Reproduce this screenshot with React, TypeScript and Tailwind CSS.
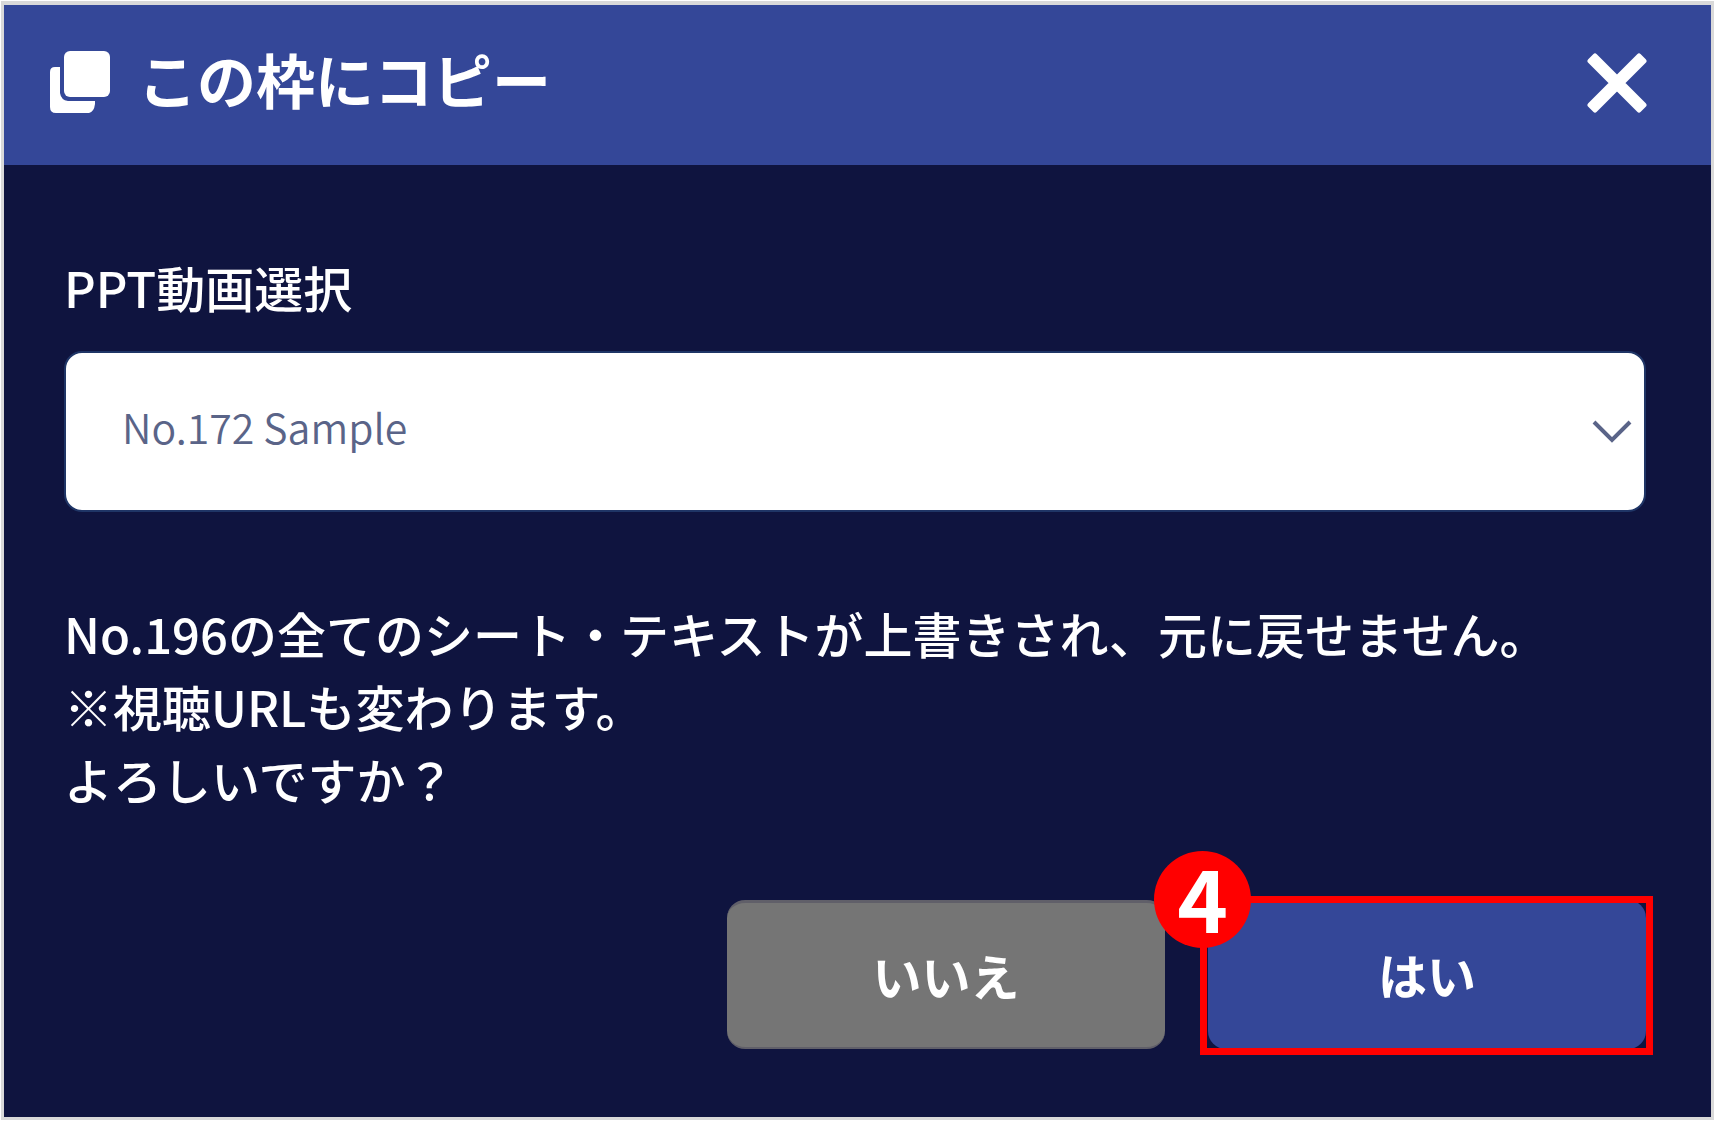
import { useState } from "react";

const videos = ["No.172 Sample"];

function CopyIcon() {
  return (
    <svg viewBox="0 0 60 62" className="h-[62px] w-[60px]" fill="currentColor" aria-hidden="true">
      <rect x="14" y="0" width="46" height="46" rx="6" />
      <path d="M10 16v26q1 7 8 8h27v3q-1 8-6 9H6q-6 0-6-6V21q0-5 5-5z" />
    </svg>
  );
}

function CloseIcon() {
  return (
    <svg viewBox="0 0 60 60" className="size-[60px]" aria-hidden="true">
      <path
        d="M8 3l22 22L52 3l5 5-22 22 22 22-5 5-22-22L8 57l-5-5 22-22L3 8z"
        fill="currentColor"
        stroke="currentColor"
        strokeWidth="5"
        strokeLinejoin="round"
      />
    </svg>
  );
}

function ChevronIcon() {
  return (
    <svg viewBox="0 0 40 24" className="h-6 w-10" aria-hidden="true">
      <path d="M2 2l18 18L38 2" fill="none" stroke="currentColor" strokeWidth="4" />
    </svg>
  );
}

export default function App() {
  const [video, setVideo] = useState(videos[0]);

  const button =
    "h-[149px] w-[438px] rounded-[18px] pb-0.5 text-[49px] leading-[73px] font-bold text-white";

  return (
    <div className="flex min-h-screen flex-col bg-white p-px font-['Noto_Sans_CJK_JP',sans-serif]">
      <div
        role="dialog"
        aria-labelledby="dialog-title"
        className="flex flex-1 flex-col border-x-[3px] border-t-4 border-b-[3px] border-[#d9d9d9] bg-[#0f143f] text-white"
      >
        <header className="flex h-40 items-start justify-between bg-[#344798] pt-[46px] pr-[64px] pl-[46px]">
          <div className="flex items-start gap-7">
            <CopyIcon />
            <h1 id="dialog-title" className="text-[59px] leading-[56px] font-bold">
              この枠にコピー
            </h1>
          </div>
          <button type="button" aria-label="閉じる" className="pt-0.5">
            <CloseIcon />
          </button>
        </header>

        <div className="flex flex-col pt-[85px] pr-[65px] pb-[68px] pl-[60px] text-[49px] leading-[73px] font-medium">
          <label htmlFor="video">PPT動画選択</label>
          <div className="relative mt-7 text-[#5a6488]">
            <select
              id="video"
              value={video}
              onChange={(e) => setVideo(e.target.value)}
              className="h-[161px] w-full appearance-none rounded-[18px] border-2 border-[#1f3566] bg-white pr-20 pb-3 pl-14 text-[41px] leading-[66px] font-[350]"
            >
              {videos.map((v) => (
                <option key={v}>{v}</option>
              ))}
            </select>
            <span className="pointer-events-none absolute inset-y-0 right-3.5 flex items-center">
              <ChevronIcon />
            </span>
          </div>

          <p className="mt-[84px]">
            No.196の全てのシート・テキストが上書きされ、元に戻せません。
            <br />
            ※視聴URLも変わります。
            <br />
            よろしいですか？
          </p>

          <div className="mt-[85px] flex justify-end gap-[43px]">
            <button
              type="button"
              className={`${button} border-t-[3px] border-b-2 border-[#605f69] bg-[#757575]`}
            >
              いいえ
            </button>
            {/* 手順4の強調枠と番号 */}
            <div className="relative">
              <button type="button" className={`${button} bg-[#344798]`}>
                はい
              </button>
              <span className="pointer-events-none absolute -top-1 -right-[7px] -bottom-1.5 -left-2 border-[7px] border-[#ff0000]" />
              <span className="absolute -top-[49px] -left-[54px] flex size-[97px] items-center justify-center rounded-full bg-[#ff0000] pb-2 text-[86px] leading-[88px] font-bold">
                4
              </span>
            </div>
          </div>
        </div>
      </div>
    </div>
  );
}
